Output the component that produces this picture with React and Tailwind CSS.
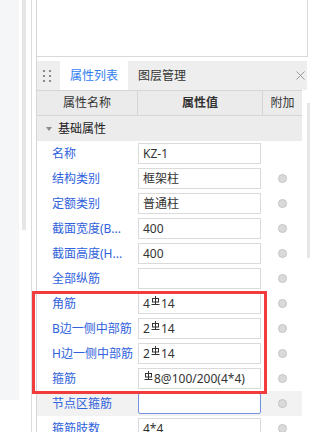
import React from 'react';

// small grade-III rebar mark used in the steel values
const Rebar = () => (
    <svg width="9" height="10" viewBox="0 0 9 10" className="mx-px inline-block -translate-y-[3px]" fill="none" stroke="#333" strokeWidth="1">
        <line x1="4.5" y1="0" x2="4.5" y2="9" />
        <rect x="1.5" y="2.5" width="6" height="3.5" />
        <line x1="0.5" y1="8.5" x2="8.5" y2="8.5" />
    </svg>
);

const rows = [
    { label: '名称', value: 'KZ-1', radio: false },
    { label: '结构类别', value: '框架柱' },
    { label: '定额类别', value: '普通柱' },
    { label: '截面宽度(B...', value: '400' },
    { label: '截面高度(H...', value: '400' },
    { label: '全部纵筋', value: '' },
    { label: '角筋', value: <>4<Rebar />14</> },
    { label: 'B边一侧中部筋', value: <>2<Rebar />14</> },
    { label: 'H边一侧中部筋', value: <>2<Rebar />14</> },
    { label: '箍筋', value: <><Rebar />8@100/200(4*4)</> },
    { label: '节点区箍筋', value: '', active: true },
    { label: '箍筋肢数', value: '4*4' },
];

const Row = ({ label, value, radio = true, active }) => (
    <div className={`flex h-[25px] items-center ${active ? 'bg-[#f2f2f2]' : ''}`}>
        <div className="w-[101px] pl-[15px] whitespace-nowrap text-[#2f62dc]">{label}</div>
        <div className="w-[125px]">
            <div
                className={`flex h-[21px] w-[123px] items-center bg-white pl-[4px] text-[#333] whitespace-nowrap ${
                    active ? 'rounded-[2px] border border-[#7394dc]' : 'border border-[#dadada]'
                }`}
            >
                {value}
            </div>
        </div>
        <div className="flex flex-1 justify-center">
            {radio && <span className="h-[9px] w-[9px] rounded-full border border-[#c4c4c4] bg-[#dadada]" />}
        </div>
    </div>
);

export default function App() {
    return (
        <div className="relative flex h-[432px] w-[310px] items-start overflow-hidden bg-white text-[12px] leading-none font-['Noto_Sans','Noto_Sans_CJK_SC',sans-serif]">
            {/* left strip */}
            <div className="h-[400px] w-[19px] shrink-0 bg-[#f5f6f8]" />
            <div className="w-[12px] shrink-0">
                <div className="ml-[3px] h-[230px] w-[4px] bg-[#e6e6e6]" />
            </div>
            <div className="h-[432px] w-[5px] shrink-0 border-l border-[#dcdcdc]" />

            {/* panel */}
            <div className="h-[432px] w-[274px] shrink-0 border-l border-[#d6d6d6]">
                <div className="h-[57px] w-[271px] border-r border-b border-[#d9d9d9]" />
                <div className="h-[4px]" />

                {/* tabs */}
                <div className="flex h-[29px] w-[270px] items-stretch bg-[#eeeeee]">
                    <div className="grid w-[23px] grid-cols-2 content-center justify-center gap-x-[3px] gap-y-[3px] pl-[6px] pr-[9px]">
                        {[0, 1, 2, 3, 4, 5].map(i => (
                            <span key={i} className="h-[2px] w-[2px] bg-[#8a8a8a]" />
                        ))}
                    </div>
                    <div className="flex w-[68px] items-center justify-center bg-white text-[#2f7df0]">属性列表</div>
                    <div className="flex items-center pl-[10px] text-[#333]">图层管理</div>
                    <div className="flex flex-1 items-center justify-end pr-[2px]">
                        <svg width="9" height="9" viewBox="0 0 9 9" stroke="#9a9a9a" strokeWidth="1">
                            <line x1="0.5" y1="0.5" x2="8.5" y2="8.5" />
                            <line x1="8.5" y1="0.5" x2="0.5" y2="8.5" />
                        </svg>
                    </div>
                </div>

                <div className="flex">
                    {/* table */}
                    <div className="w-[265px] shrink-0">
                        <div className="flex h-[26px] border-y border-[#d6d6d6] bg-[#ebebeb] text-[#333]">
                            <div className="flex w-[101px] items-center justify-center border-r border-[#d6d6d6]">属性名称</div>
                            <div className="flex w-[125px] items-center justify-center border-r border-[#d6d6d6] font-bold">属性值</div>
                            <div className="flex flex-1 items-center justify-center">附加</div>
                        </div>
                        <div className="flex h-[25px] items-center bg-[#ececec] text-[#222]">
                            <svg width="6" height="4" viewBox="0 0 6 4" className="ml-[9px] mr-[6px]">
                                <path d="M0 0 L6 0 L3 4 Z" fill="#8a8a8a" />
                            </svg>
                            基础属性
                        </div>
                        {rows.map(r => (
                            <Row key={r.label} {...r} />
                        ))}
                    </div>
                    {/* scrollbar */}
                    <div className="w-[8px] shrink-0">
                        <div className="ml-[5px] mt-[13px] h-[155px] w-[3px] bg-[#e6e6e6]" />
                    </div>
                </div>
            </div>

            {/* red highlight */}
            <div className="absolute left-[32px] top-[291px] h-[103px] w-[235px] border-[3px] border-[#f03c3c]" />
        </div>
    );
}
